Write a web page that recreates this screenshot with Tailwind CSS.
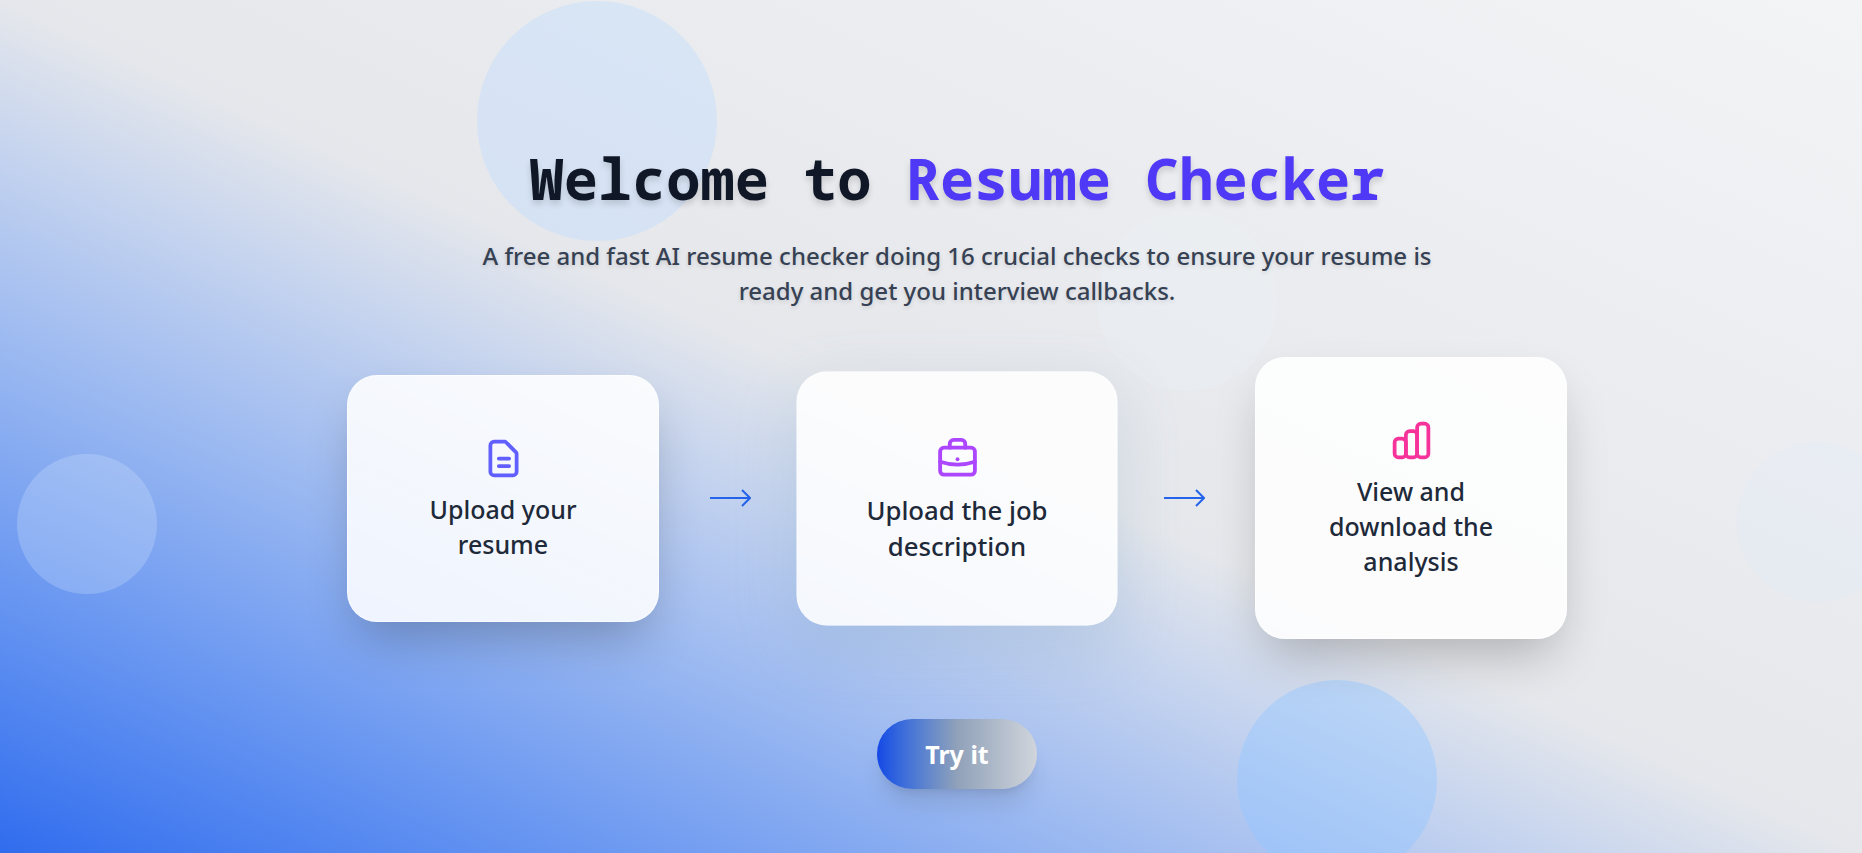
<!DOCTYPE html>
<html lang="en">
<head>
<meta charset="utf-8">
<title>Resume Checker</title>
<meta name="viewport" content="width=device-width, initial-scale=1">
<script src="https://cdn.jsdelivr.net/npm/@tailwindcss/browser@4"></script>
</head>
<body class="font-['Noto_Sans','Open_Sans',sans-serif]">
<div class="relative isolate min-h-screen overflow-hidden bg-linear-to-tr from-[#306cee] via-gray-200 to-gray-100">
  <!-- Decorative bubbles -->
  <div class="absolute inset-0 -z-10" aria-hidden="true">
    <div class="absolute left-[477px] top-px size-60 rounded-full bg-blue-200/40"></div>
    <div class="absolute left-[17px] top-[454px] size-[140px] rounded-full bg-blue-100/25"></div>
    <div class="absolute left-[1097px] top-[211px] size-[180px] rounded-full bg-sky-50/15"></div>
    <div class="absolute left-[1237px] top-[680px] size-[200px] rounded-full bg-blue-300/40"></div>
    <div class="absolute left-[1737px] top-[442px] size-40 rounded-full bg-blue-100/20"></div>
  </div>

  <main class="flex flex-col items-center pt-[146px] pb-[63px] pl-[52px] text-center">
    <h1 class="font-['Noto_Sans_Mono','DejaVu_Sans_Mono',monospace] text-[57px] leading-16 font-bold text-gray-900 text-shadow-[0_4px_6px_rgb(0_0_0/0.15)]">Welcome to <span class="text-indigo-600">Resume Checker</span></h1>
    <p class="mt-7 max-w-[960px] text-[24px] leading-[35px] font-medium text-gray-700 text-shadow-[0_2px_4px_rgb(0_0_0/0.12)]">A free and fast AI resume checker doing 16 crucial checks to ensure your resume is ready and get you interview callbacks.</p>

    <div class="mt-[49px] flex items-center">
      <section class="flex w-[312px] flex-col items-center gap-[11px] rounded-[30px] border border-white/60 bg-white/87 px-[60px] pt-[60px] pb-[59px] shadow-2xl">
        <svg class="size-[45px] text-indigo-500" viewBox="0 0 24 24" fill="none" stroke="currentColor" stroke-width="2" stroke-linecap="round" stroke-linejoin="round" aria-hidden="true"><path d="M5 5a2 2 0 0 1 2-2h5.600a1 1 0 0 1 .7.3l5.400 5.400a1 1 0 0 1 .3.7V19a2 2 0 0 1-2 2H7a2 2 0 0 1-2-2zM9.500 12h5.500M9.500 16h5.500"/></svg>
        <h2 class="text-[25px] leading-[35px] font-medium text-gray-800">Upload your resume</h2>
      </section>
      <svg class="mx-[50px] h-6 w-[42px] text-[#2563eb]" viewBox="0 0 42 24" fill="none" stroke="currentColor" stroke-width="2" aria-hidden="true"><path d="M1 12h40M33 4l8 8-8 8"/></svg>
      <section class="flex w-[312px] scale-103 flex-col items-center gap-[11px] rounded-[30px] border border-white/20 bg-white/87 px-[60px] pt-[60px] pb-[59px] shadow-[0_20px_60px_rgb(110_150_180/0.22)]">
        <svg class="size-[45px] text-purple-500" viewBox="0 0 24 24" fill="none" stroke="currentColor" stroke-width="2" stroke-linecap="round" stroke-linejoin="round" aria-hidden="true"><rect x="3" y="7" width="18" height="14" rx="2"/><path d="M8 7V5a2 2 0 0 1 2-2h4a2 2 0 0 1 2 2v2M3 14.300q9 3 18 0"/><circle cx="12" cy="13" r="1" fill="currentColor" stroke="none"/></svg>
        <h2 class="text-[25px] leading-[35px] font-medium text-gray-800">Upload the job description</h2>
      </section>
      <svg class="mx-[50px] h-6 w-[42px] text-[#2563eb]" viewBox="0 0 42 24" fill="none" stroke="currentColor" stroke-width="2" aria-hidden="true"><path d="M1 12h40M33 4l8 8-8 8"/></svg>
      <section class="flex w-[312px] flex-col items-center gap-[11px] rounded-[30px] border border-white/60 bg-white/87 px-[60px] pt-[60px] pb-[59px] shadow-2xl">
        <svg class="size-[45px] text-pink-500" viewBox="0 0 24 24" fill="none" stroke="currentColor" stroke-width="2" aria-hidden="true"><rect x="3" y="11" width="6" height="10" rx="2"/><rect x="9" y="7" width="6" height="14" rx="2"/><rect x="15" y="3" width="6" height="18" rx="2"/></svg>
        <h2 class="text-[25px] leading-[35px] font-medium text-gray-800">View and download the analysis</h2>
      </section>
    </div>

    <button type="button" class="mt-20 h-[70px] w-40 rounded-full bg-linear-to-r from-blue-700 via-slate-400 to-gray-300 text-[25px] leading-[35px] font-bold text-white shadow-xl">Try it</button>
  </main>
</div>
</body>
</html>
